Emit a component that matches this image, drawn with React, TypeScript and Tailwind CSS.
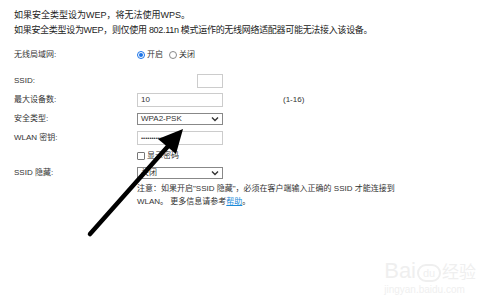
import React from 'react';

const rows = [
  { label: '最大设备数:', kind: 'input', value: '10', hint: '(1-16)' },
  { label: '安全类型:', kind: 'select', value: 'WPA2-PSK' },
  { label: 'WLAN 密钥:', kind: 'password', value: '••••••••••••' },
];

const Chevron = () => (
  <svg className="w-[8px] h-[6px]" viewBox="0 0 8 6" fill="none" stroke="#333" strokeWidth={1.4}>
    <path d="M1 1.5l3 3 3-3" />
  </svg>
);

const App: React.FC = () => {
  return (
    <div className="relative w-[500px] h-[308px] bg-white overflow-hidden text-[#333]" style={{ fontFamily: '"Liberation Sans", "Noto Sans CJK SC", sans-serif' }}>
      <div className="pl-[14px] pt-[8px]">
        {/* top notes */}
        <div className="text-[9px] leading-[15px] text-[#222]">
          <p className="h-[15px]">如果安全类型设为WEP，将无法使用WPS。</p>
          <p className="h-[15px] tracking-[-0.3px]">如果安全类型设为WEP，则仅使用 802.11n 模式运作的无线网络适配器可能无法接入该设备。</p>
        </div>

        <div className="text-[8px] leading-[12px] mt-[11px]">
          {/* wireless toggle */}
          <div className="flex items-center h-[12px]">
            <span className="w-[123px]">无线局域网:</span>
            <span className="flex items-center gap-[2px]">
              <span className="w-[8px] h-[8px] rounded-full border border-[#1a73e8] flex items-center justify-center">
                <span className="w-[4px] h-[4px] rounded-full bg-[#1a73e8]" />
              </span>
              <span>开启</span>
            </span>
            <span className="flex items-center gap-[2px] ml-[6px]">
              <span className="w-[8px] h-[8px] rounded-full border border-[#888]" />
              <span>关闭</span>
            </span>
          </div>

          {/* SSID */}
          <div className="flex items-center h-[14px] mt-[13px]">
            <span className="w-[183px]">SSID:</span>
            <span className="w-[26px] h-[14px] border border-[#ccc]" />
          </div>

          {rows.map((r) => (
            <div key={r.label} className="flex items-center h-[14px] mt-[5px]">
              <span className="w-[123px]">{r.label}</span>
              {r.kind === 'select' ? (
                <span className="w-[86px] h-[12px] border border-[#888] flex items-center justify-between px-[3px]">
                  <span>{r.value}</span>
                  <Chevron />
                </span>
              ) : (
                <span className={`w-[86px] h-[14px] border border-[#ccc] flex items-center px-[3px] ${r.kind === 'password' ? 'text-[6px] tracking-[0px]' : ''}`}>
                  {r.value}
                </span>
              )}
              {r.hint && <span className="ml-[60px]">{r.hint}</span>}
            </div>
          ))}

          {/* show password */}
          <div className="flex items-center h-[12px] mt-[5px] pl-[123px] gap-[2px]">
            <span className="w-[8px] h-[8px] border border-[#777] rounded-[1px]" />
            <span>显示密码</span>
          </div>

          {/* SSID hidden */}
          <div className="flex items-center h-[12px] mt-[5px]">
            <span className="w-[123px]">SSID 隐藏:</span>
            <span className="w-[86px] h-[12px] border border-[#888] flex items-center justify-between px-[3px]">
              <span>关闭</span>
              <Chevron />
            </span>
          </div>

          <div className="pl-[123px] mt-[3px] leading-[13px]">
            <p>注意：如果开启"SSID 隐藏"，必须在客户端输入正确的 SSID 才能连接到</p>
            <p>WLAN。 更多信息请参考<span className="text-[#1a8ad8] underline">帮助</span>。</p>
          </div>
        </div>
      </div>

      {/* annotation arrow */}
      <svg className="absolute left-0 top-0 w-[500px] h-[308px] pointer-events-none" viewBox="0 0 500 308">
        <line x1="90" y1="234" x2="170" y2="144" stroke="#000" strokeWidth={4.5} strokeLinecap="round" />
        <polygon points="183,129 176,154 158,139" fill="#000" />
      </svg>

      {/* watermark */}
      <div className="absolute right-[24px] bottom-[12px] text-[#efefef] flex flex-col items-start">
        <div className="flex items-end gap-[1px] text-[22px] leading-[22px]" style={{ fontFamily: '"Liberation Sans", sans-serif' }}>
          <span>Bai</span>
          <span className="w-[24px] h-[18px] rounded-full border-2 border-[#efefef] text-[11px] leading-[14px] text-center">du</span>
          <span className="text-[17px]" style={{ fontFamily: '"Noto Sans CJK SC", sans-serif' }}>经验</span>
        </div>
        <span className="text-[10px] leading-[12px] mt-[2px]">jingyan.baidu.com</span>
      </div>
    </div>
  );
};

export default App;
